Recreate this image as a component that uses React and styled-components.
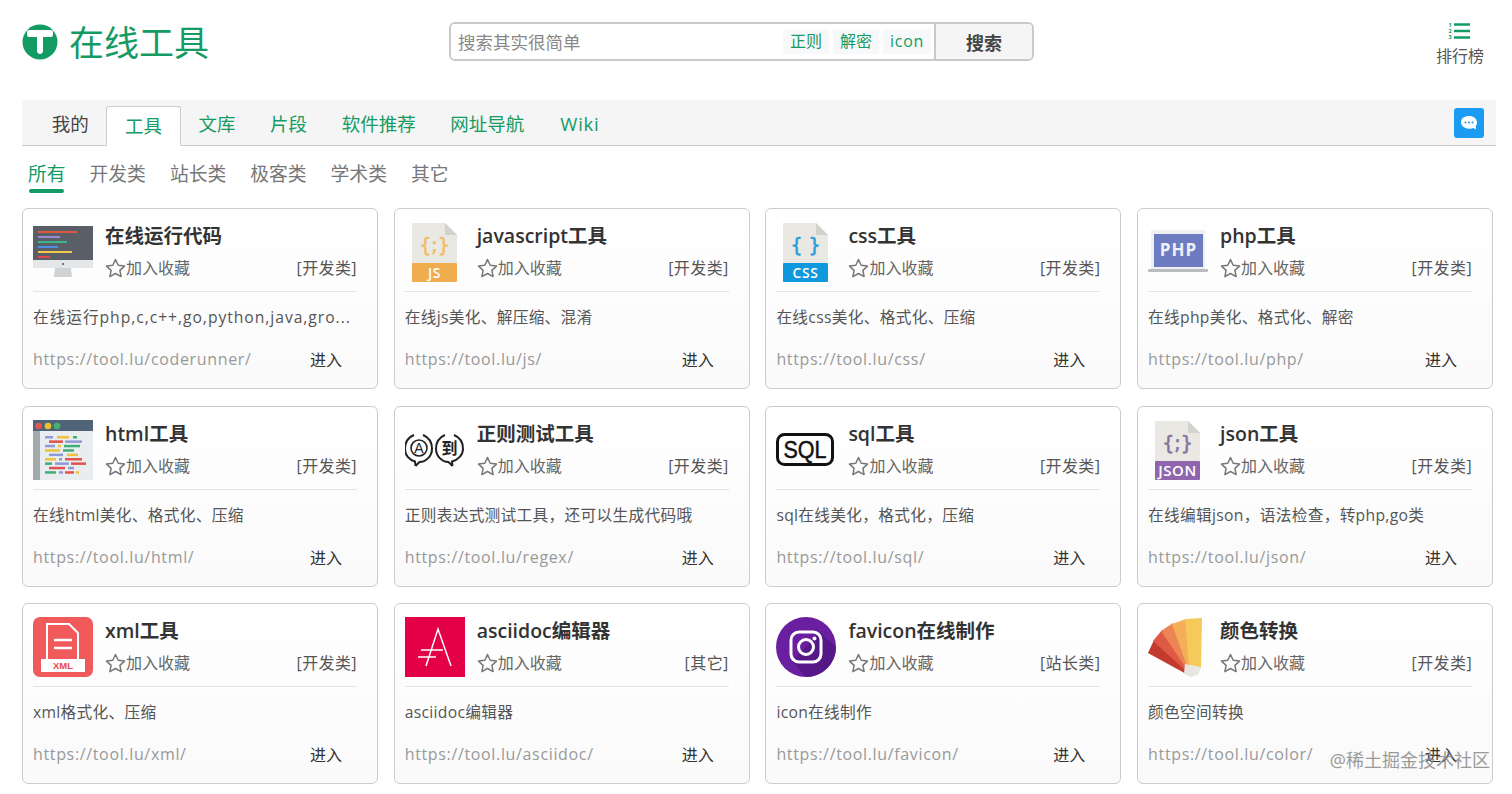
import React from 'react';
import styled, { createGlobalStyle } from 'styled-components';

const GREEN = '#149a63';

const tabs = ['我的', '工具', '文库', '片段', '软件推荐', '网址导航', 'Wiki'];
const cats = ['所有', '开发类', '站长类', '极客类', '学术类', '其它'];

const FileIcon = ({ color, label, glyph, glyphColor, labelSize = 14 }) => (
	<svg width="60" height="60" viewBox="0 0 60 60">
		<path d="M7 1h33l12 12v28H7z" fill="#e9e8e3" />
		<path d="M40 1l12 12H40z" fill="#d2d1cb" />
		<text
			x="29.500"
			y="30"
			textAnchor="middle"
			fontSize="19"
			fontFamily="DejaVu Sans, sans-serif"
			fill={glyphColor}
			stroke={glyphColor}
			strokeWidth="0.600"
		>
			{glyph}
		</text>
		<rect x="7" y="41" width="45" height="19" rx="1" fill={color} />
		<text x="29.500" y="56" textAnchor="middle" fontSize={labelSize} fontWeight="600" fontFamily="Open Sans, sans-serif" letterSpacing="0.500" fill="#fff">
			{label}
		</text>
	</svg>
);

const MonitorIcon = () => (
	<svg width="60" height="60" viewBox="0 0 60 60">
		<rect x="0" y="4" width="60" height="34" fill="#5a5e66" />
		<rect x="0" y="38" width="60" height="8" fill="#e4e6e8" />
		<circle cx="30" cy="42" r="1.200" fill="#777" />
		<path d="M22 46h16l1 9H21z" fill="#cfd3d6" />
		<rect x="5" y="9" width="39" height="2" fill="#e0573f" />
		<rect x="5" y="14" width="22" height="2" fill="#9c86d6" />
		<rect x="5" y="19" width="29" height="2" fill="#3fb58a" />
		<rect x="5" y="24" width="20" height="2" fill="#4a90e2" />
		<rect x="5" y="29" width="34" height="2" fill="#f2c94c" />
		<rect x="5" y="34" width="12" height="2" fill="#e0464a" />
	</svg>
);

const LaptopIcon = () => (
	<svg width="60" height="60" viewBox="0 0 60 60">
		<rect x="3" y="8" width="54" height="39" rx="1" fill="#eef0f3" />
		<rect x="6" y="12" width="49" height="33" fill="#6d7cc0" />
		<rect x="0" y="47" width="60" height="3" rx="1" fill="#b9bdbf" />
		<text x="30.500" y="34" textAnchor="middle" fontSize="17" fontWeight="700" fontFamily="Open Sans, sans-serif" letterSpacing="1" fill="#eef0f8">
			PHP
		</text>
	</svg>
);

const codeRows = [
	[[12, 8, '#8e9ad6'], [24, 12, '#f0c23a'], [40, 4, '#3fae78']],
	[[16, 14, '#e0524c'], [32, 17, '#8e9ad6']],
	[[12, 10, '#8e9ad6'], [25, 3, '#f0c23a'], [31, 16, '#3fae78']],
	[[12, 15, '#f0c23a'], [30, 11, '#3fae78']],
	[[16, 14, '#8e9ad6'], [34, 11, '#f0c23a']],
	[[12, 11, '#f0c23a'], [26, 3, '#8e9ad6'], [32, 17, '#e0524c']],
	[[12, 7, '#3fae78'], [22, 14, '#8e9ad6'], [38, 15, '#e0524c']],
	[[16, 16, '#e0524c'], [35, 6, '#8e9ad6']],
	[[12, 11, '#3fae78'], [26, 4, '#8e9ad6'], [32, 9, '#e0524c'], [43, 3, '#f0c23a']],
];

const HtmlIcon = () => (
	<svg width="60" height="60" viewBox="0 0 60 60">
		<rect x="0" y="0" width="60" height="60" fill="#e9edf0" />
		<rect x="0" y="0" width="60" height="11" fill="#4f6477" />
		<rect x="0" y="11" width="7" height="49" fill="#a2aaae" />
		<circle cx="5.500" cy="6" r="3.300" fill="#e0574f" />
		<circle cx="15" cy="6" r="3.300" fill="#f0bf2c" />
		<circle cx="24" cy="6" r="3.300" fill="#45b36f" />
		{codeRows.map((row, i) =>
			row.map(([x, w, c], j) => <rect key={`${i}-${j}`} x={x} y={16 + i * 4.4} width={w} height="2.500" fill={c} />),
		)}
	</svg>
);

const RegexIcon = () => (
	<svg width="60" height="60" viewBox="0 0 60 60">
		<g fill="none" stroke="#222" strokeWidth="2">
			<path d="M10.500 46l-.5-4.500C4 40 0 35 0 29c0-7 4-12 9-14M18 15c5 2 9 7 9 14 0 7-6 13-12.500 13l-4 4" />
			<path d="M47.500 46l-.5-4.500C53 40 58 35 58 29c0-7-4-12-9-14M40 15c-5 2-9 7-9 14 0 7 6 13 12.500 13l4 4" />
		</g>
		<circle cx="14" cy="28" r="8" fill="none" stroke="#222" strokeWidth="1.600" />
		<text x="14" y="33" textAnchor="middle" fontSize="14" fontFamily="Liberation Sans, sans-serif" fill="#222">
			A
		</text>
		<text x="44.500" y="34" textAnchor="middle" fontSize="16" fontWeight="700" fontFamily="Noto Sans CJK SC, sans-serif" fill="#222">
			到
		</text>
	</svg>
);

const SqlIcon = () => (
	<svg width="60" height="60" viewBox="0 0 60 60">
		<rect x="1.500" y="14.500" width="55" height="30" rx="7" fill="none" stroke="#111" strokeWidth="3" />
		<text
			x="29"
			y="38"
			textAnchor="middle"
			fontSize="24"
			textLength="43"
			lengthAdjust="spacingAndGlyphs"
			fontFamily="Liberation Sans, sans-serif"
			fill="#111"
			stroke="#111"
			strokeWidth="0.500"
		>
			SQL
		</text>
	</svg>
);

const XmlIcon = () => (
	<svg width="60" height="60" viewBox="0 0 60 60">
		<rect width="60" height="60" rx="7" fill="#f05a5a" />
		<path d="M14 42V7h22l9 9v26" fill="none" stroke="#fff" strokeWidth="2" />
		<path d="M21 23h18M21 31h18" stroke="#fff" strokeWidth="2.500" />
		<rect x="8" y="42" width="44" height="13" fill="#fff" />
		<text x="30" y="52" textAnchor="middle" fontSize="9.500" fontWeight="700" fontFamily="Liberation Sans, sans-serif" fill="#e8494b">
			XML
		</text>
	</svg>
);

const AsciidocIcon = () => (
	<svg width="60" height="60" viewBox="0 0 60 60">
		<rect width="60" height="60" fill="#e40046" />
		<path d="M21 49L33 12l13 37M16 33h22M13 40h18" fill="none" stroke="#fff" strokeWidth="1.500" />
	</svg>
);

const FaviconIcon = () => (
	<svg width="60" height="60" viewBox="0 0 60 60">
		<circle cx="30" cy="30" r="30" fill="#6a1fa0" />
		<path d="M30 60a30 30 0 0 0 30-30L44 16 16 44l14 16z" fill="#561787" />
		<rect x="15" y="15" width="30" height="30" rx="8" fill="none" stroke="#fff" strokeWidth="3" />
		<circle cx="30" cy="30" r="7.500" fill="none" stroke="#fff" strokeWidth="3" />
		<circle cx="38.500" cy="21.500" r="2" fill="#fff" />
	</svg>
);

const ColorIcon = () => (
	<svg width="60" height="60" viewBox="0 0 60 60">
		<path d="M40 58L0 36l6-13 36 30z" fill="#c23b2e" />
		<path d="M40 56L5 24l9-11 29 39z" fill="#df5a44" />
		<path d="M40 54L13 14l12-8 20 44z" fill="#ec8453" />
		<path d="M40 52L24 7l14-5 9 46z" fill="#f4ae57" />
		<path d="M41 50L37 2l17-1-1 50z" fill="#f5ca5a" />
		<path d="M37 47l16 3-3 8-8 2-6-4z" fill="#e8e6e0" />
	</svg>
);

const tools = [
	{ name: '在线运行代码', cat: '开发类', desc: '在线运行php,c,c++,go,python,java,gro...', wide: true, url: 'coderunner', icon: <MonitorIcon /> },
	{
		name: 'javascript工具',
		cat: '开发类',
		desc: '在线js美化、解压缩、混淆',
		url: 'js',
		icon: <FileIcon color="#f0ad4e" label="JS" glyph="{;}" glyphColor="#f0bd6a" />,
	},
	{
		name: 'css工具',
		cat: '开发类',
		desc: '在线css美化、格式化、压缩',
		url: 'css',
		icon: <FileIcon color="#0f98dc" label="CSS" glyph="{ }" glyphColor="#2a9ddc" />,
	},
	{ name: 'php工具', cat: '开发类', desc: '在线php美化、格式化、解密', url: 'php', icon: <LaptopIcon /> },
	{ name: 'html工具', cat: '开发类', desc: '在线html美化、格式化、压缩', url: 'html', icon: <HtmlIcon /> },
	{ name: '正则测试工具', cat: '开发类', desc: '正则表达式测试工具，还可以生成代码哦', url: 'regex', icon: <RegexIcon /> },
	{ name: 'sql工具', cat: '开发类', desc: 'sql在线美化，格式化，压缩', url: 'sql', icon: <SqlIcon /> },
	{
		name: 'json工具',
		cat: '开发类',
		desc: '在线编辑json，语法检查，转php,go类',
		url: 'json',
		icon: <FileIcon color="#8f66ad" label="JSON" labelSize={15} glyph="{;}" glyphColor="#85759a" />,
	},
	{ name: 'xml工具', cat: '开发类', desc: 'xml格式化、压缩', url: 'xml', icon: <XmlIcon /> },
	{ name: 'asciidoc编辑器', cat: '其它', desc: 'asciidoc编辑器', url: 'asciidoc', icon: <AsciidocIcon /> },
	{ name: 'favicon在线制作', cat: '站长类', desc: 'icon在线制作', url: 'favicon', icon: <FaviconIcon /> },
	{ name: '颜色转换', cat: '开发类', desc: '颜色空间转换', url: 'color', icon: <ColorIcon /> },
];

const App = () => {
	return (
		<Page>
			<GlobalStyle />
			<Header>
				<Logo>
					<svg width="36" height="36" viewBox="0 0 36 36">
						<circle cx="18" cy="18" r="17.500" fill={GREEN} />
						<path d="M7 6h22a2 2 0 0 1 2 2v3a2 2 0 0 1-2 2h-8v15l-2 2h-2l-2-2V13H7a2 2 0 0 1-2-2V8a2 2 0 0 1 2-2z" fill="#fff" />
					</svg>
					<LogoText>在线工具</LogoText>
				</Logo>
				<SearchBox>
					<SearchInput placeholder="搜索其实很简单" />
					<Chip>正则</Chip>
					<Chip>解密</Chip>
					<Chip $latin>icon</Chip>
					<SearchBtn>搜索</SearchBtn>
				</SearchBox>
				<Rank>
					<RankIcon width="22" height="18" viewBox="0 0 22 18">
						<path d="M6 2.500h16M6 9h16M6 15.500h16" stroke={GREEN} strokeWidth="2.600" />
						<text x="0.500" y="5" fontSize="5.500" fontWeight="700" fill={GREEN}>
							1
						</text>
						<text x="0.500" y="11" fontSize="5.500" fontWeight="700" fill={GREEN}>
							2
						</text>
						<text x="0.500" y="17" fontSize="5.500" fontWeight="700" fill={GREEN}>
							3
						</text>
					</RankIcon>
					<RankText>排行榜</RankText>
				</Rank>
			</Header>

			<TabBar>
				{tabs.map((t, i) => (
					<Tab key={t} $active={i === 1} $plain={i === 0} $latin={t === 'Wiki'}>
						{t}
					</Tab>
				))}
				<ChatBtn>
					<svg width="18" height="16" viewBox="0 0 20 18">
						<path d="M10 1c5 0 9 3 9 7.500 0 1.500-.5 3-1.500 4l.5 3.500-3.500-1.500c-1.500.7-3 1-4.500 1-5 0-9-3-9-7.500S5 1 10 1z" fill="#fff" />
						<circle cx="6" cy="8.500" r="1.200" fill="#1b9cf2" />
						<circle cx="10" cy="8.500" r="1.200" fill="#1b9cf2" />
						<circle cx="14" cy="8.500" r="1.200" fill="#1b9cf2" />
					</svg>
				</ChatBtn>
			</TabBar>

			<CatBar>
				{cats.map((c, i) => (
					<Cat key={c} $active={i === 0}>
						{c}
					</Cat>
				))}
			</CatBar>

			<Grid>
				{tools.map((tool) => (
					<Card key={tool.url}>
						<CardTop>
							<IconBox>{tool.icon}</IconBox>
							<Info>
								<Name>{tool.name}</Name>
								<InfoRow>
									<Fav>
										<svg width="21" height="20" viewBox="0 0 21 20">
											<path
												d="M10.500 1.500l2.700 5.800 6.300.8-4.600 4.300 1.200 6.200-5.600-3.100-5.600 3.100 1.200-6.200L1.500 8.100l6.300-.8z"
												fill="none"
												stroke="#777"
												strokeWidth="1.500"
												strokeLinejoin="round"
											/>
										</svg>
										加入收藏
									</Fav>
									<Category>[{tool.cat}]</Category>
								</InfoRow>
							</Info>
						</CardTop>
						<Desc $wide={tool.wide}>{tool.desc}</Desc>
						<Foot>
							<Url>https://tool.lu/{tool.url}/</Url>
							<Enter>进入</Enter>
						</Foot>
					</Card>
				))}
			</Grid>
			<Watermark>@稀土掘金技术社区</Watermark>
		</Page>
	);
};

export default App;

const GlobalStyle = createGlobalStyle`
	html, body {
		margin: 0;
		padding: 0;
		background: #fff;
	}
	body {
		font-family: 'Open Sans', 'Noto Sans CJK SC', sans-serif;
	}
	* {
		box-sizing: border-box;
	}
`;
const Page = styled.div`
	position: relative;
	height: 794px;
	padding: 0 16px 0 22px;
	overflow: hidden;
`;
const Header = styled.header`
	height: 100px;
	padding-top: 22px;
	display: flex;
	align-items: flex-start;
`;
const Logo = styled.div`
	width: 427px;
	height: 40px;
	display: flex;
	align-items: center;
	gap: 11px;
`;
const LogoText = styled.span`
	padding-top: 2px;
	font-size: 35px;
	line-height: 40px;
	color: ${GREEN};
`;
const SearchBox = styled.div`
	width: 585px;
	height: 39px;
	display: flex;
	align-items: center;
	border: 2px solid #c9c9c9;
	border-radius: 6px;
	overflow: hidden;
`;
const SearchInput = styled.input`
	flex: 1;
	min-width: 0;
	height: 100%;
	padding: 0 7px;
	border: none;
	outline: none;
	font-family: 'Noto Sans CJK SC', sans-serif;
	font-size: 17.500px;
	&::placeholder {
		color: #888;
	}
`;
const Chip = styled.span`
	margin-right: ${(props) => (props.$latin ? 3 : 4)}px;
	padding: 0 7px;
	height: 25px;
	line-height: 25px;
	background-color: #f7f8fa;
	font-size: 16px;
	color: ${GREEN};
	${(props) => props.$latin && `letter-spacing: 0.7px;`}
`;
const SearchBtn = styled.button`
	width: 98px;
	height: 100%;
	border: none;
	border-left: 2px solid #c9c9c9;
	background-color: #f5f5f5;
	font-family: 'Noto Sans CJK SC', sans-serif;
	font-size: 18px;
	font-weight: 700;
	color: #444;
`;
const Rank = styled.div`
	margin-left: auto;
	margin-right: 12px;
	display: flex;
	flex-direction: column;
	align-items: center;
	gap: 5px;
`;
const RankIcon = styled.svg`
	margin-right: 2px;
`;
const RankText = styled.span`
	font-size: 16px;
	line-height: 22px;
	color: #555;
`;
const TabBar = styled.nav`
	height: 46px;
	padding: 6px 12px 0 12.500px;
	display: flex;
	align-items: stretch;
	background-color: #f5f5f5;
	border-bottom: 1px solid #ccc;
`;
const Tab = styled.a`
	padding: 0 ${(props) => (props.$active ? 18 : 17.3)}px;
	margin-bottom: -1px;
	font-size: 18.500px;
	line-height: 36px;
	color: ${(props) => (props.$plain ? '#444' : GREEN)};
	${(props) => props.$latin && `letter-spacing: 0.7px; margin-left: 1.5px;`}
	${(props) =>
		props.$active &&
		`background-color: #fff;
		border: 1px solid #ccc;
		border-bottom-color: #fff;
		border-radius: 3px 3px 0 0;
		line-height: 38px;`}
`;
const ChatBtn = styled.span`
	margin-left: auto;
	margin-top: 2px;
	width: 30px;
	height: 30px;
	display: flex;
	align-items: center;
	justify-content: center;
	background-color: #1b9cf2;
	border-radius: 3px;
`;
const CatBar = styled.div`
	height: 62px;
	padding-left: 6px;
	display: flex;
	gap: 24px;
`;
const Cat = styled.a`
	position: relative;
	height: 47px;
	padding-top: 13px;
	font-size: 18.800px;
	line-height: 30px;
	color: ${(props) => (props.$active ? GREEN : '#777')};
	${(props) =>
		props.$active &&
		`&::after {
			content: '';
			position: absolute;
			left: 1px;
			right: 2px;
			bottom: 0;
			height: 4px;
			border-radius: 2px;
			background-color: ${GREEN};
		}`}
`;
const Grid = styled.div`
	width: 1472px;
	display: grid;
	grid-template-columns: repeat(4, 356px);
	grid-auto-rows: 181px;
	gap: 16.500px 15.700px;
`;
const Card = styled.div`
	padding: 13px 20px 0 10px;
	background: linear-gradient(#fff, #fafafa);
	border: 1px solid #ccc;
	border-radius: 6px;
`;
const CardTop = styled.div`
	height: 70px;
	display: flex;
	gap: 12px;
	border-bottom: 1px solid #e4e4e4;
`;
const IconBox = styled.div`
	width: 60px;
	height: 60px;
	flex: none;
`;
const Info = styled.div`
	flex: 1;
	min-width: 0;
`;
const Name = styled.div`
	height: 28px;
	font-size: 19.500px;
	font-weight: 600;
	line-height: 28px;
	color: #333;
`;
const InfoRow = styled.div`
	margin-top: 3px;
	display: flex;
	justify-content: space-between;
	align-items: center;
	font-size: 16px;
	line-height: 30px;
	color: #666;
`;
const Fav = styled.span`
	display: flex;
	align-items: center;
`;
const Category = styled.span`
	letter-spacing: 0.4px;
	color: #555;
`;
const Desc = styled.div`
	margin-top: 10px;
	height: 30px;
	font-size: 15.700px;
	letter-spacing: ${(props) => (props.$wide ? 0.95 : 0.3)}px;
	line-height: 30px;
	color: #555;
	white-space: nowrap;
`;
const Foot = styled.div`
	margin-top: 12px;
	display: flex;
	justify-content: space-between;
	line-height: 30px;
`;
const Url = styled.span`
	font-size: 16px;
	letter-spacing: 0.65px;
	color: #999;
`;
const Enter = styled.span`
	margin-right: 15px;
	padding-top: 1px;
	font-size: 16px;
	color: #333;
`;
const Watermark = styled.div`
	position: absolute;
	right: 22px;
	bottom: 21px;
	font-size: 18px;
	line-height: 26px;
	color: #8a8a8a;
	opacity: 0.85;
`;
